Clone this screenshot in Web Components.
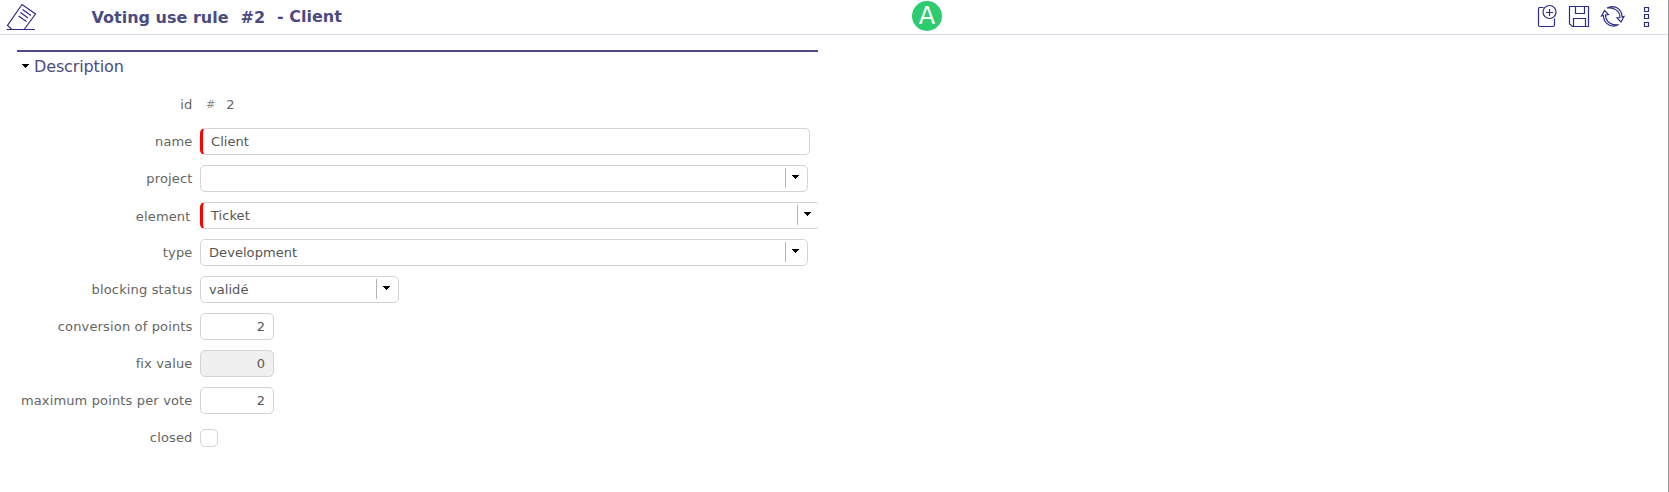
<!DOCTYPE html>
<html lang="en">
<head>
<meta charset="utf-8">
<title>Voting use rule</title>
<style>
html,body{margin:0;height:100%;background:#fff}
body{font-family:"DejaVu Sans",Verdana,sans-serif;overflow:hidden}
</style>
</head>
<body>
<rule-page></rule-page>
<script>
const define = (name, html) => customElements.define(name, class extends HTMLElement {
  constructor() {
    super();
    this.attachShadow({mode: 'open'}).innerHTML = html;
  }
});

define('rule-header', `
<style>
:host{display:flex;box-sizing:border-box;height:35px;border-bottom:1px solid #dcdce8;color:#4b4b82;align-items:flex-start}
svg{display:block;fill:none;stroke:#2d2d86;stroke-width:1.2}
.logo{margin:3px 0 0 6px}
h1{font-size:16px;line-height:20px;font-weight:bold;margin:8px 0 0 53.5px;width:820.5px;white-space:pre;display:flex}
h1 span+span{margin-left:12px}
.client{position:relative;top:-1px}
.avatar{width:30px;height:30px;border-radius:50%;background:#2ecc71;color:#fff;font-size:24px;line-height:31px;text-align:center;margin-top:1px}
.tools{margin:4px 14px 0 auto}
</style>
<svg class="logo" width="32" height="29"><path d="M.5 26.500H29M5.500 26L1.500 22.500L16 1.500L29.500 11L18.500 26M16.500 6.500L25 12.500M14.500 9.500L22 15M12.500 13L20.500 18.500"/></svg>
<h1><span>Voting use rule</span><span>#2</span><span class="client">- Client</span></h1>
<div class="avatar">A</div>
<div class="tools">
<svg width="118" height="26">
<path d="M7.500 3.500H3.500Q2.500 3.500 2.500 5V21Q2.500 22.500 4 22.500H16.500Q18.500 22.500 18.500 21V14.500"/>
<circle cx="13.500" cy="8" r="6.500"/><path d="M10 8.500H17M13.500 5V12"/>
<path d="M33.500 2.500H52.500V22.500H36.500L33.500 20ZM39.500 2.500V9.500H48.500V2.500M37.500 22.500V14.500H49.500V22.500"/>
<path d="M71 4C77.500 .5 86 4 86 13L88 12.500L85 18L81 14L84 13.500C84 7 78 2.800 71 4Z"/>
<path d="M82.500 20.500C76 24.500 67.500 20 67.500 11.500L65.500 12L68.500 6.500L72.500 10.500L69.500 11C69.500 17.500 75.500 22 82.500 20.500Z"/>
<path d="M108.500 3.500H112.500V7.500H108.500ZM108.500 10.500H112.500V14.500H108.500ZM108.500 18.500H112.500V22.500H108.500Z"/>
</svg>
</div>`);

define('form-row', `
<style>
:host{display:flex;height:37px;align-items:center;font-size:13px;line-height:17px;color:#656565}
.label{width:192.500px;text-align:right;margin-right:7.500px;white-space:nowrap;flex:none;letter-spacing:.15px}
:host([nudge]) .label{width:190.500px;margin-right:9.500px;position:relative;top:1px}
</style><div class="label"><slot name="label"></slot></div><slot></slot>`);

define('text-box', `
<style>
:host{display:flex;box-sizing:border-box;width:var(--w);height:27px;border:1px solid #d4d4d4;border-radius:5px;padding:0 8px;align-items:center;color:#555;flex:none;letter-spacing:.06px}
:host([required]){border-left:3px solid red}
:host([number]){--w:74px;justify-content:flex-end;padding-right:8px}
:host([disabled]){background:#f0f0f0}
</style><slot></slot>`);

define('select-box', `
<style>
:host{display:flex;box-sizing:border-box;width:var(--w);height:27px;border:1px solid #d4d4d4;border-radius:5px;padding-left:8px;align-items:center;color:#555;flex:none;letter-spacing:.06px}
:host([required]){border-left:3px solid red}
.v{flex:1}
.arrow{width:22px;height:20px;box-sizing:border-box;border-left:1px solid #b4b4b4;padding:7px 0 0 6px;margin-bottom:1px}
svg{display:block}
</style><span class="v"><slot></slot></span><span class="arrow"><svg width="8" height="5"><path fill="#000" d="M0 0H7V1H6V2H5V3H4V4H3V3H2V2H1V1H0Z"/></svg></span>`);

define('check-box', `<style>:host{display:block;box-sizing:border-box;width:18px;height:18px;border:1px solid #d4d4d4;border-radius:5px;margin-top:1px}</style>`);

define('form-section', `
<style>
:host{display:block;width:801px;margin:15px 0 0 17px;border-top:2px solid #4b4b82;overflow:hidden}
.head{display:flex;height:34px;font-size:16px;line-height:20px;color:#4b4b82;align-items:flex-start}
svg{margin:12px 5px 0 5px}
.head span{margin-top:5px;letter-spacing:-.13px}
.rows{margin-left:-17px}
</style>
<div class="head"><svg width="7" height="4"><path fill="#000" d="M0 0H7V1H6V2H5V3H4V4H3V3H2V2H1V1H0Z"/></svg><span><slot name="title"></slot></span></div>
<div class="rows"><slot></slot></div>`);

define('rule-page', `
<style>
:host{display:block;box-sizing:border-box;height:492px;border-right:1px solid #999}
.hash{font-size:11px;margin-left:6px;color:#888}
.num{margin-left:11px}
</style>
<rule-header></rule-header>
<form-section><span slot="title">Description</span>
<form-row><span slot="label">id</span><span class="hash">#</span><span class="num">2</span></form-row>
<form-row><span slot="label">name</span><text-box required style="--w:610px">Client</text-box></form-row>
<form-row><span slot="label">project</span><select-box style="--w:608px"></select-box></form-row>
<form-row nudge><span slot="label">element</span><select-box required style="--w:620px">Ticket</select-box></form-row>
<form-row><span slot="label">type</span><select-box style="--w:608px">Development</select-box></form-row>
<form-row><span slot="label">blocking status</span><select-box style="--w:199px">validé</select-box></form-row>
<form-row><span slot="label">conversion of points</span><text-box number>2</text-box></form-row>
<form-row><span slot="label">fix value</span><text-box number disabled>0</text-box></form-row>
<form-row><span slot="label">maximum points per vote</span><text-box number>2</text-box></form-row>
<form-row><span slot="label">closed</span><check-box></check-box></form-row>
</form-section>`);
</script>
</body>
</html>
